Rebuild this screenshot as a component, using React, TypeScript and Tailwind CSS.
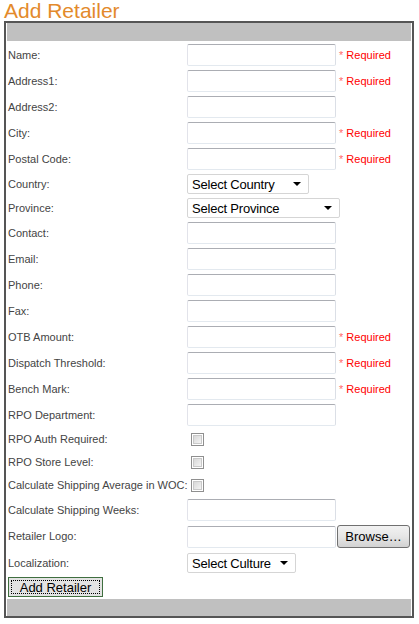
import React from "react";

type Row =
  | { label: string; kind: "text"; req?: boolean }
  | { label: string; kind: "select"; text: string; w: number }
  | { label: string; kind: "check" }
  | { label: string; kind: "file" };

const rows: Row[] = [
  { label: "Name:", kind: "text", req: true },
  { label: "Address1:", kind: "text", req: true },
  { label: "Address2:", kind: "text" },
  { label: "City:", kind: "text", req: true },
  { label: "Postal Code:", kind: "text", req: true },
  { label: "Country:", kind: "select", text: "Select Country", w: 122 },
  { label: "Province:", kind: "select", text: "Select Province", w: 153 },
  { label: "Contact:", kind: "text" },
  { label: "Email:", kind: "text" },
  { label: "Phone:", kind: "text" },
  { label: "Fax:", kind: "text" },
  { label: "OTB Amount:", kind: "text", req: true },
  { label: "Dispatch Threshold:", kind: "text", req: true },
  { label: "Bench Mark:", kind: "text", req: true },
  { label: "RPO Department:", kind: "text" },
  { label: "RPO Auth Required:", kind: "check" },
  { label: "RPO Store Level:", kind: "check" },
  { label: "Calculate Shipping Average in WOC:", kind: "check" },
  { label: "Calculate Shipping Weeks:", kind: "text" },
  { label: "Retailer Logo:", kind: "file" },
];

function TextBox() {
  return (
    <div className="h-[22px] w-[149px] rounded-[2px] border border-t-[#abadb3] border-l-[#e2e3ea] border-r-[#dbdfe6] border-b-[#e3e9ef] bg-white" />
  );
}

function SelectBox({ text, w }: { text: string; w: number }) {
  return (
    <div
      className="flex h-[20px] items-center justify-between rounded-[2px] border border-[#d5d5d5] bg-white pl-[4px] pr-[7px] text-[13px] text-black leading-none"
      style={{ width: w }}
    >
      <span className="tracking-[-0.2px]">{text}</span>
      <svg width="8" height="4" viewBox="0 0 8 4">
        <path d="M0 0 H8 L4 4 Z" fill="#000" />
      </svg>
    </div>
  );
}

function Check() {
  return (
    <div className="ml-[4px] h-[13px] w-[13px] border border-[#8f8f8f] bg-white p-[1px]">
      <div className="h-full w-full border border-[#c9c9c9] bg-gradient-to-br from-[#d8d8d8] to-[#f4f4f4]" />
    </div>
  );
}

function Required() {
  return (
    <span className="ml-[3px] text-[11px] text-[#ff0000]">
      <span className="text-[#ff6a6a]">*</span> Required
    </span>
  );
}

export default function App() {
  return (
    <div className="h-[624px] w-[419px] bg-white font-['Liberation_Sans',Arial,sans-serif]">
      <div className="h-[21px] pl-[4px] text-[21px] leading-[21px] text-[#e38a2b]">Add Retailer</div>
      <div className="ml-[4px] w-[410px] border-2 border-[#555555]">
        <div className="mx-[1px] h-[18px] bg-[#c0c0c0]" />
        <div className="mt-[1px]">
          {rows.map((r, i) => {
            const h =
              r.kind === "text" ? "h-[26px]" : r.kind === "select" ? "h-[24px]" : r.kind === "check" ? "h-[23px]" : "h-[27px]";
            return (
              <div key={i} className={`flex items-center ${h}`}>
                <div className="w-[181px] pl-[2px] text-[11px] text-[#444444] whitespace-nowrap">{r.label}</div>
                {r.kind === "text" && (
                  <div className="flex items-center">
                    <TextBox />
                    {r.req && <Required />}
                  </div>
                )}
                {r.kind === "select" && <SelectBox text={r.text} w={r.w} />}
                {r.kind === "check" && <Check />}
                {r.kind === "file" && (
                  <div className="flex items-center">
                    <TextBox />
                    <div className="ml-[1px] flex h-[23px] w-[73px] items-center justify-center rounded-[3px] border border-[#707070] bg-gradient-to-b from-[#f2f2f2] via-[#e6e6e6] to-[#d2d2d2] text-[13px] text-black">
                      Browse…
                    </div>
                  </div>
                )}
              </div>
            );
          })}
          <div className="flex h-[26px] items-center">
            <div className="w-[181px] pl-[2px] text-[11px] text-[#444444]">Localization:</div>
            <SelectBox text="Select Culture" w={109} />
          </div>
          <div className="h-[22px] pl-[2px] pt-[1px]">
            <div className="flex h-[20px] w-[95px] items-center justify-center border border-[#3f6f3f] bg-[#e3e3e3] p-[2px]">
              <div className="flex h-full w-full items-center justify-center border border-dotted border-black text-[13px] leading-none text-black">
                Add Retailer
              </div>
            </div>
          </div>
        </div>
        <div className="mx-[1px] mt-[1px] h-[17px] bg-[#c0c0c0]" />
      </div>
    </div>
  );
}
